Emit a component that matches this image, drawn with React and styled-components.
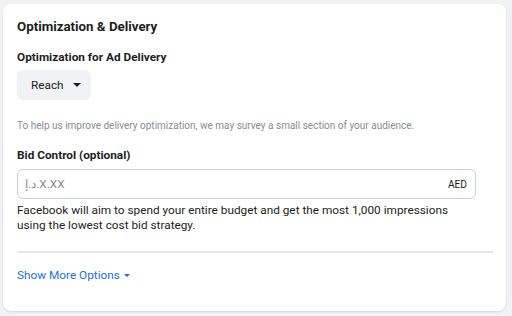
import React from "react";
import styled, { createGlobalStyle } from "styled-components";

const Global = createGlobalStyle`
  html, body { margin: 0; padding: 0; background: #f0f2f5; }
  body { font-family: Roboto, "Liberation Sans", Arial, sans-serif; color: #1c1e21; }
  * { box-sizing: border-box; }
`;

const Page = styled.div`
  width: 512px;
  height: 316px;
  padding: 4px 6px 5px 3px;
`;

const Card = styled.section`
  background: #fff;
  border-radius: 8px;
  box-shadow: 0 1px 2px rgba(0, 0, 0, 0.12);
  height: 307px;
  padding: 14px 13px 0 14px;
  display: flex;
  flex-direction: column;
`;

const Title = styled.h2`
  margin: 0;
  font-size: 13.3px;
  line-height: 18px;
  font-weight: 700;
  color: #1c1e21;
`;

const Label = styled.div`
  font-size: 11.8px;
  line-height: 16px;
  font-weight: 700;
  color: #1c1e21;
  margin-top: ${(p) => p.$mt}px;
`;

const SelectButton = styled.button`
  align-self: flex-start;
  margin-top: 5px;
  height: 30px;
  width: 74px;
  border: none;
  border-radius: 6px;
  background: #f0f2f5;
  font-family: inherit;
  font-size: 11.8px;
  color: #1c1e21;
  display: flex;
  align-items: center;
  gap: 9px;
  padding: 0 0 0 14px;
`;

const Caret = styled.span`
  width: 0;
  height: 0;
  border-left: ${(p) => p.$s}px solid transparent;
  border-right: ${(p) => p.$s}px solid transparent;
  border-top: ${(p) => p.$s}px solid ${(p) => p.$c};
  display: inline-block;
`;

const Helper = styled.p`
  margin: 19px 0 0;
  font-size: 10px;
  line-height: 14px;
  color: #8a8d91;
`;

const InputBox = styled.div`
  margin-top: 6px;
  height: 30px;
  width: 459px;
  border: 1px solid #ccd0d5;
  border-radius: 6px;
  display: flex;
  align-items: center;
  padding: 0 8px 0 7px;
`;

const Input = styled.input`
  flex: 1;
  border: none;
  outline: none;
  font-family: inherit;
  font-size: 11.8px;
  color: #1c1e21;
  padding: 0;
  &::placeholder { color: #8a8d91; }
`;

const Currency = styled.span`
  font-size: 10.2px;
  color: #1c1e21;
`;

const Description = styled.p`
  margin: 4px 0 0;
  font-size: 11.8px;
  line-height: 15px;
  color: #1c1e21;
`;

const Divider = styled.hr`
  margin: 18px 0 0;
  width: 476px;
  border: none;
  height: 2px;
  background: #e4e6eb;
`;

const MoreLink = styled.a`
  margin-top: 14px;
  align-self: flex-start;
  font-size: 11.8px;
  line-height: 16px;
  color: #216fdb;
  text-decoration: none;
  display: flex;
  align-items: center;
  gap: 4px;
  cursor: pointer;
`;

export default function App() {
  return (
    <>
      <Global />
      <Page>
        <Card>
          <Title>Optimization &amp; Delivery</Title>
          <Label $mt={13}>Optimization for Ad Delivery</Label>
          <SelectButton>
            Reach <Caret $s={4} $c="#1c1e21" />
          </SelectButton>
          <Helper>
            To help us improve delivery optimization, we may survey a small section of your audience.
          </Helper>
          <Label $mt={14}>Bid Control (optional)</Label>
          <InputBox>
            <Input placeholder="د.إ.X.XX" />
            <Currency>AED</Currency>
          </InputBox>
          <Description>
            Facebook will aim to spend your entire budget and get the most 1,000 impressions
            <br />
            using the lowest cost bid strategy.
          </Description>
          <Divider />
          <MoreLink>
            Show More Options <Caret $s={3} $c="#216fdb" />
          </MoreLink>
        </Card>
      </Page>
    </>
  );
}
